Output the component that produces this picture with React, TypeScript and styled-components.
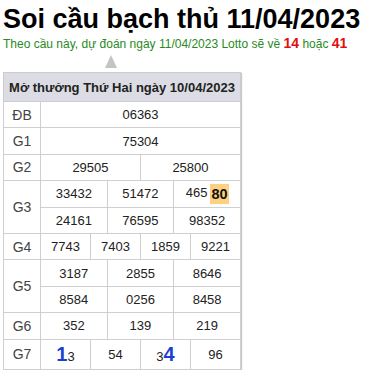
import React from "react";
import styled, { createGlobalStyle } from "styled-components";

const Global = createGlobalStyle`
  html, body { margin: 0; padding: 0; background: #fff; }
  body { font-family: "Liberation Sans", Arial, sans-serif; }
`;

const Page = styled.div`
  padding: 4px 3px 0 3px;
  width: 369px;
  box-sizing: border-box;
`;

const Title = styled.h1`
  margin: 0;
  font-size: 27px;
  font-weight: bold;
  line-height: 31px;
  color: #000;
  white-space: nowrap;
`;

const Subtitle = styled.p`
  margin: 0;
  font-size: 12px;
  line-height: 16px;
  color: #2a8a22;
  white-space: nowrap;
`;

const Hot = styled.b`
  color: #e01010;
  font-size: 14px;
`;

const Arrow = styled.div`
  width: 0;
  height: 0;
  margin: 3px 0 0 102px;
  border-left: 6px solid transparent;
  border-right: 6px solid transparent;
  border-bottom: 13px solid #c4c4c4;
`;

const Table = styled.table`
  margin-top: 4px;
  width: 238px;
  border-collapse: collapse;
  table-layout: fixed;
  font-size: 13px;
  color: #222;
  box-shadow: 1px 1px 1px #c9c9c9;
`;

const HeadCell = styled.th`
  background: #dcdce4;
  border: 1px solid #cbcbd3;
  height: 28px;
  padding: 0;
  font-weight: bold;
  font-size: 13px;
  color: #222;
  text-align: center;
`;

const Label = styled.td`
  border: 1px solid #cfcfcf;
  text-align: center;
  color: #444;
  font-size: 14px;
  padding: 0;
`;

const Cell = styled.td<{ $tall?: boolean }>`
  border: 1px solid #cfcfcf;
  text-align: center;
  padding: 0;
  height: ${(p) => (p.$tall ? "29px" : "25.4px")};
`;

const Mark = styled.b`
  display: inline-block;
  background: #fdd17f;
  font-size: 14.5px;
  line-height: 20px;
  padding: 0 1px;
  color: #111;
  vertical-align: middle;
  margin-left: 3px;
`;

const Big = styled.b`
  color: #1b3fd2;
  font-size: 20px;
`;

type Row = { label: string; values: (string | React.ReactNode)[][] };

const rows: Row[] = [
  { label: "ĐB", values: [["06363"]] },
  { label: "G1", values: [["75304"]] },
  { label: "G2", values: [["29505", "25800"]] },
  {
    label: "G3",
    values: [
      [
        "33432",
        "51472",
        <>
          465<Mark>80</Mark>
        </>,
      ],
      ["24161", "76595", "98352"],
    ],
  },
  { label: "G4", values: [["7743", "7403", "1859", "9221"]] },
  {
    label: "G5",
    values: [
      ["3187", "2855", "8646"],
      ["8584", "0256", "8458"],
    ],
  },
  { label: "G6", values: [["352", "139", "219"]] },
  {
    label: "G7",
    values: [
      [
        <>
          <Big>1</Big>3
        </>,
        "54",
        <>
          3<Big>4</Big>
        </>,
        "96",
      ],
    ],
  },
];

export default function App() {
  return (
    <Page>
      <Global />
      <Title>Soi cầu bạch thủ 11/04/2023</Title>
      <Subtitle>
        Theo cầu này, dự đoán ngày 11/04/2023 Lotto sẽ về <Hot>14</Hot> hoặc{" "}
        <Hot>41</Hot>
      </Subtitle>
      <Arrow />
      <Table>
        <colgroup>
          <col style={{ width: 37 }} />
          {Array.from({ length: 12 }).map((_, i) => (
            <col key={i} />
          ))}
        </colgroup>
        <thead>
          <tr>
            <HeadCell colSpan={13}>Mở thưởng Thứ Hai ngày 10/04/2023</HeadCell>
          </tr>
        </thead>
        <tbody>
          {rows.map((r) =>
            r.values.map((line, li) => (
              <tr key={r.label + li}>
                {li === 0 && <Label rowSpan={r.values.length}>{r.label}</Label>}
                {line.map((v, vi) => (
                  <Cell key={vi} colSpan={12 / line.length} $tall={r.label === "G7"}>
                    {v}
                  </Cell>
                ))}
              </tr>
            ))
          )}
        </tbody>
      </Table>
    </Page>
  );
}
